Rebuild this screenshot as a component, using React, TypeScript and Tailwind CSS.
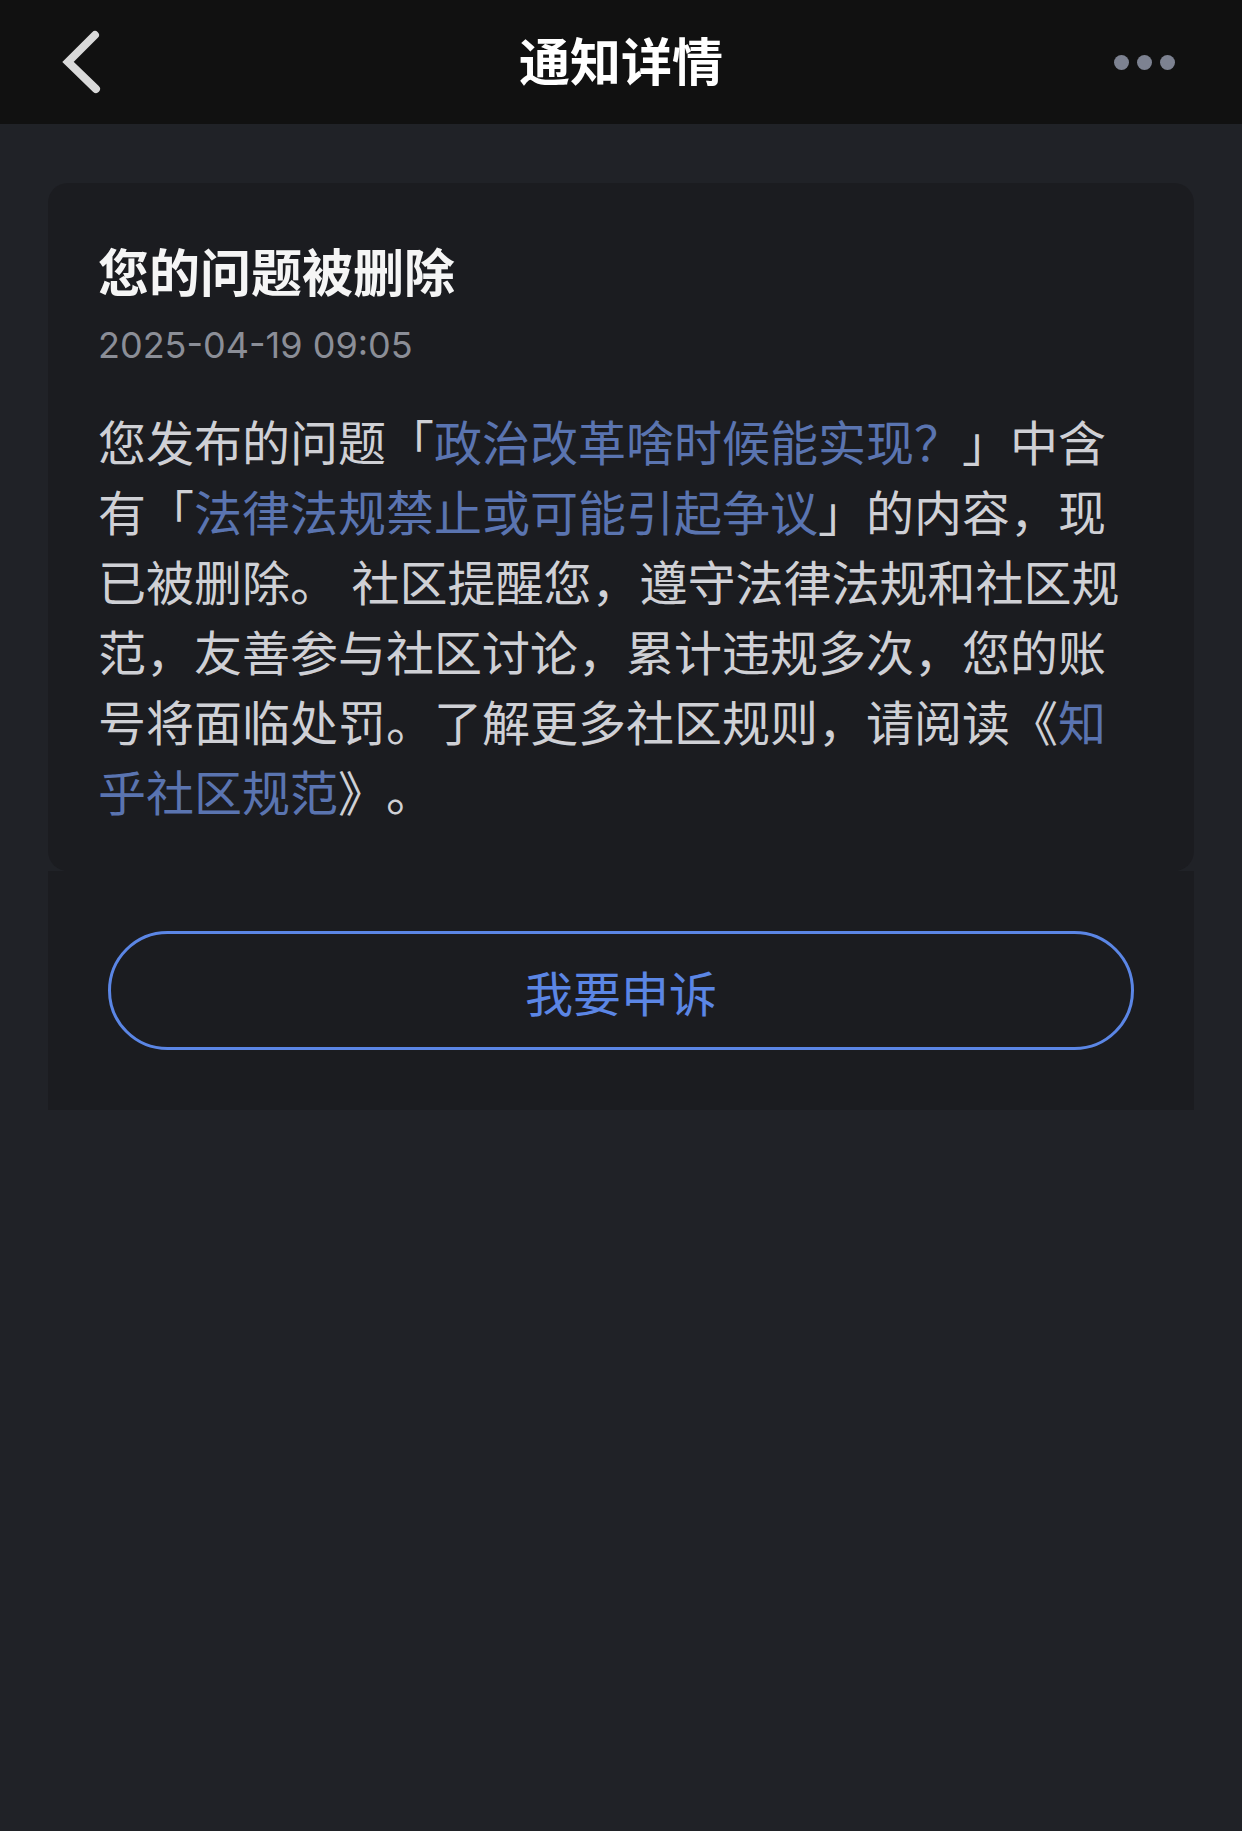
import React from "react";

export default function App() {
  return (
    <div className="min-h-[1831px] w-full bg-[#202227] font-['Inter','Noto_Sans_CJK_SC',sans-serif] [text-spacing-trim:space-all]">
      <header className="grid h-[124px] grid-cols-[1fr_auto_1fr] items-center bg-[#111111] pb-[6px]">
        <div className="flex items-center pl-[60px] pt-[6px]">
          <svg width="48" height="66" viewBox="0 0 48 66" fill="none">
            <path d="M35 6 L8 33 L36 60" stroke="#d9d9d9" strokeWidth="8" strokeLinecap="round" strokeLinejoin="miter" />
          </svg>
        </div>
        <h1 className="text-[51px] font-bold leading-[60px] text-white font-['Noto_Sans_CJK_SC',sans-serif]">通知详情</h1>
        <div className="flex items-center justify-end gap-[8px] pr-[67px] pt-[6px]">
          <span className="h-[15px] w-[15px] rounded-full bg-[#7d8291]" />
          <span className="h-[15px] w-[15px] rounded-full bg-[#7d8291]" />
          <span className="h-[15px] w-[15px] rounded-full bg-[#7d8291]" />
        </div>
      </header>

      <main className="mx-[48px] mt-[59px]">
        <section className="rounded-[20px] bg-[#1b1c20] px-[50px] pb-[42px] pt-[51px]">
          <h2 className="text-[51px] font-bold leading-[72px] text-[#f5f5f5] font-['Noto_Sans_CJK_SC',sans-serif]">
            您的问题被删除
          </h2>
          <p className="mt-[17px] text-[36px] leading-[44px] text-[#8b8e97]">2025-04-19 09:05</p>
          <p className="mt-[42px] text-[48px] leading-[70px] text-[#cfd0d5] [text-spacing-trim:space-all]">
            您发布的问题「<span className="text-[#5a74b0]">政治改革啥时候能实现？</span>」中含有「<span className="text-[#5a74b0]">法律法规禁止或可能引起争议</span>」的内容，现已被删除。 社区提醒您，遵守法律法规和社区规范，友善参与社区讨论，累计违规多次，您的账号将面临处罚。了解更多社区规则，请阅读《<span className="text-[#5a74b0]">知乎社区规范</span>》。
          </p>
        </section>
        <section className="bg-[#1b1c20] px-[60px] py-[60px]">
          <button className="flex h-[119px] w-full items-center justify-center rounded-full border-[3px] border-[#5b86e5] text-[48px] text-[#5b86e5] font-['Noto_Sans_CJK_SC',sans-serif]">
            我要申诉
          </button>
        </section>
      </main>
    </div>
  );
}
